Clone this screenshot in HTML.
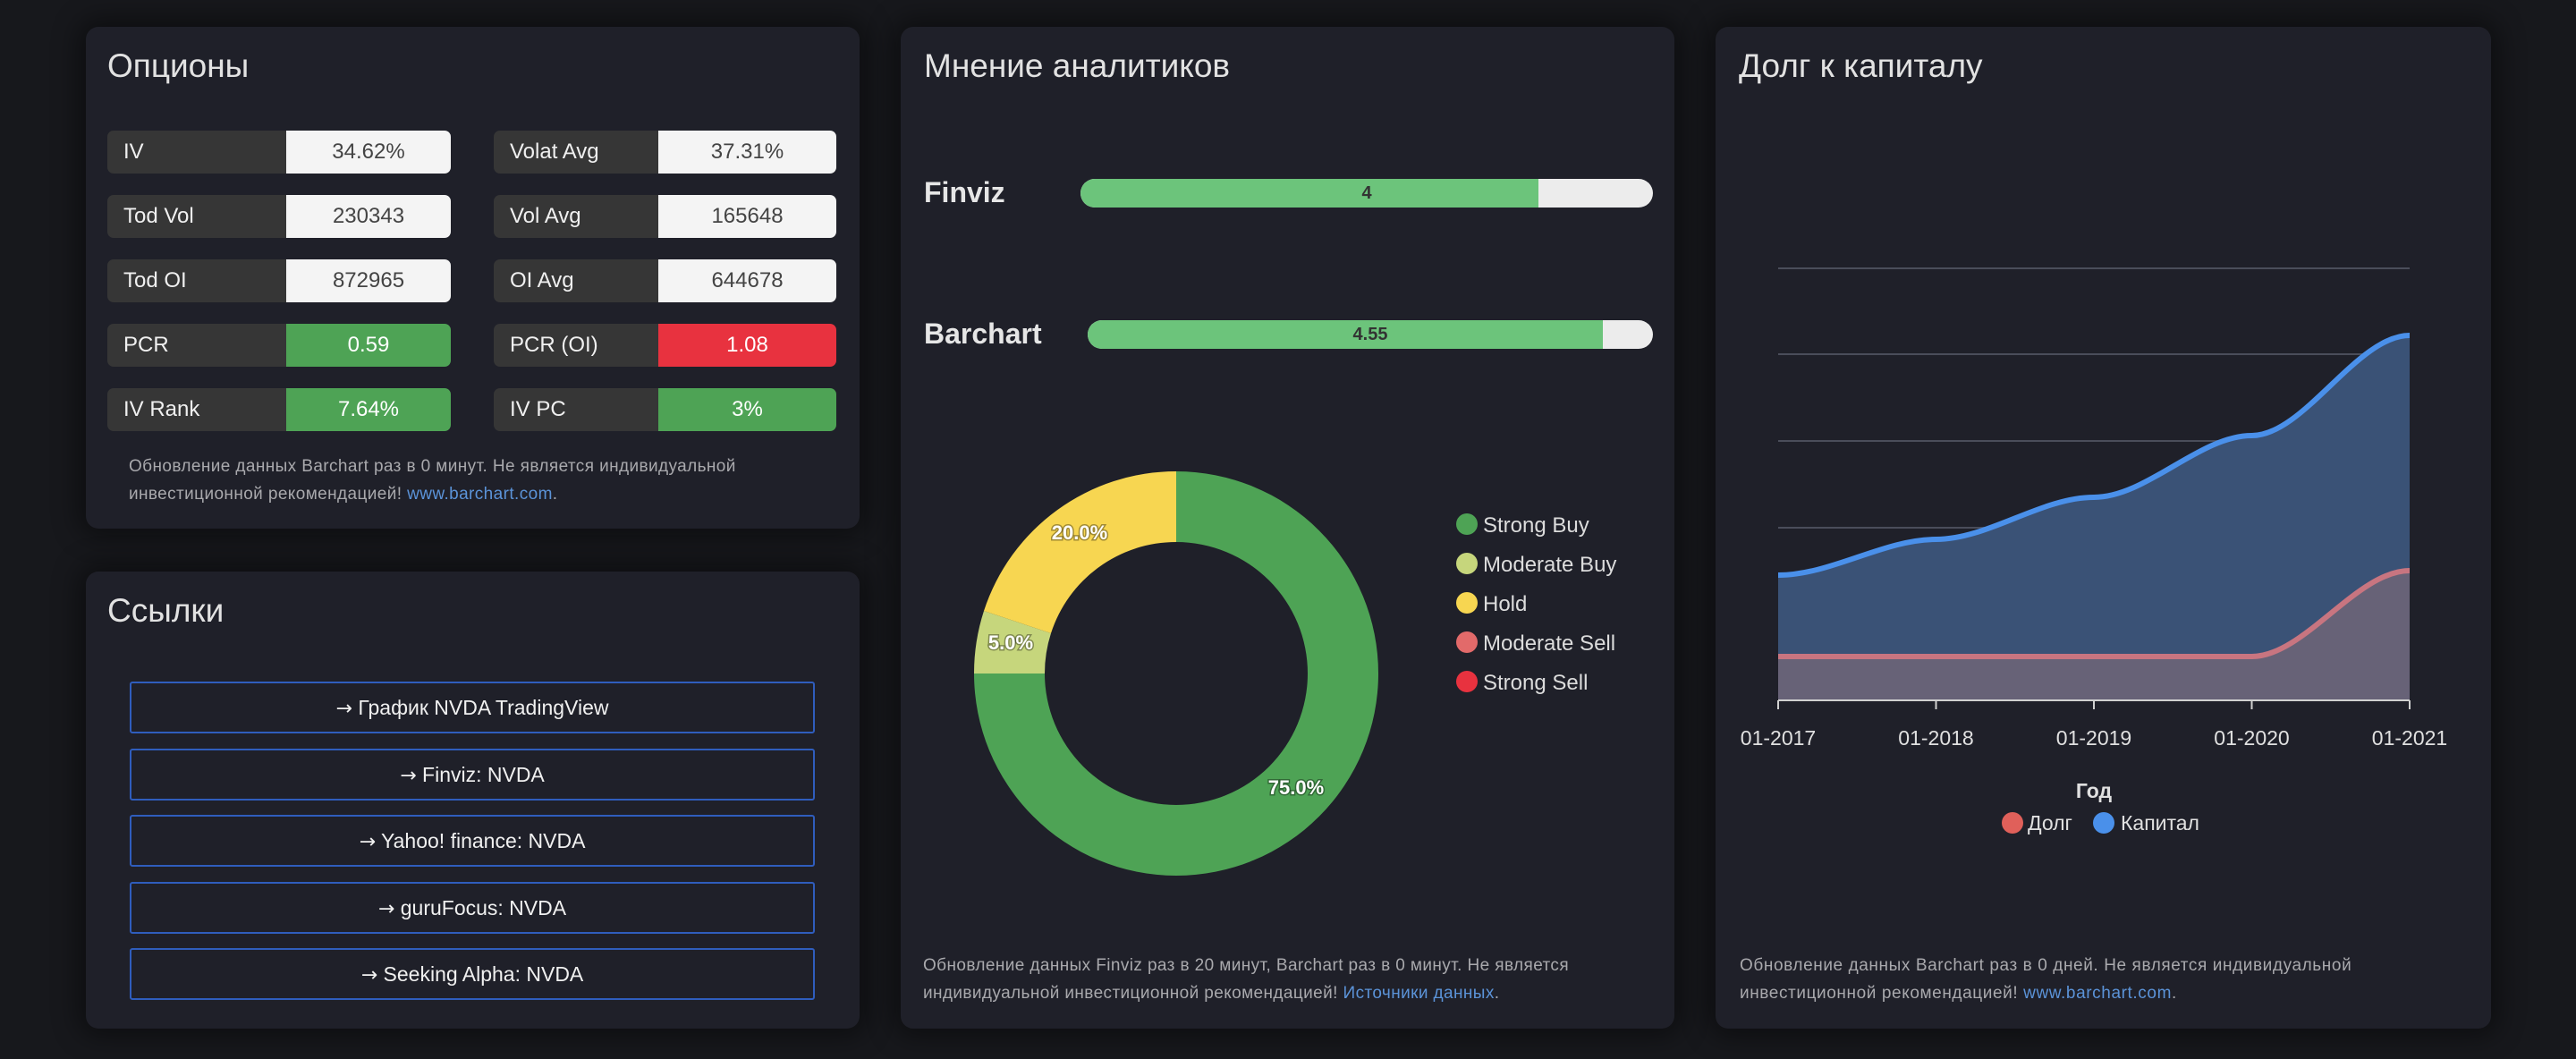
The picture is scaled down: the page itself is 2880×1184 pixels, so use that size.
<!DOCTYPE html>
<html><head><meta charset="utf-8"><style>
*{margin:0;padding:0;box-sizing:border-box}
body{width:2880px;height:1184px;background:#17181c;font-family:"Liberation Sans","DejaVu Sans",sans-serif;position:relative;overflow:hidden;color:#e4e4e4}
.card{position:absolute;background:#1f2029;border-radius:14px;box-shadow:0 0 30px 8px rgba(0,0,0,.45)}
.t{position:absolute;font-size:37px;color:#e2e2e2}
.row{position:absolute;height:48px;display:flex;border-radius:7px;overflow:hidden;font-size:24px}
.row .l{background:#363636;color:#f0f0f0;padding-left:18px;line-height:48px}
.row .v{background:#f4f4f4;color:#444;text-align:center;line-height:48px;flex:1}
.g{background:#4ea355!important;color:#fff!important}
.r{background:#e8323f!important;color:#fff!important}
.note{position:absolute;font-size:19px;line-height:31px;color:#a9a9ad}
.note a{color:#5b93d8;text-decoration:none}
.btn{position:absolute;left:145px;width:766px;height:58px;border:2px solid #2f5dbd;border-radius:3px;text-align:center;line-height:54px;font-size:23px;color:#f0f0f0}
.ar{font-family:"DejaVu Sans",sans-serif;font-size:22px}
</style></head><body>

<div class="card" style="left:96px;top:30px;width:865px;height:561px"></div>
<div class="t" style="left:120px;top:53px">Опционы</div>

<div class="row" style="left:120px;top:146px;width:384px"><div class="l" style="width:200px">IV</div><div class="v">34.62%</div></div>
<div class="row" style="left:120px;top:218px;width:384px"><div class="l" style="width:200px">Tod Vol</div><div class="v">230343</div></div>
<div class="row" style="left:120px;top:290px;width:384px"><div class="l" style="width:200px">Tod OI</div><div class="v">872965</div></div>
<div class="row" style="left:120px;top:362px;width:384px"><div class="l" style="width:200px">PCR</div><div class="v g">0.59</div></div>
<div class="row" style="left:120px;top:434px;width:384px"><div class="l" style="width:200px">IV Rank</div><div class="v g">7.64%</div></div>

<div class="row" style="left:552px;top:146px;width:383px"><div class="l" style="width:184px">Volat Avg</div><div class="v">37.31%</div></div>
<div class="row" style="left:552px;top:218px;width:383px"><div class="l" style="width:184px">Vol Avg</div><div class="v">165648</div></div>
<div class="row" style="left:552px;top:290px;width:383px"><div class="l" style="width:184px">OI Avg</div><div class="v">644678</div></div>
<div class="row" style="left:552px;top:362px;width:383px"><div class="l" style="width:184px">PCR (OI)</div><div class="v r">1.08</div></div>
<div class="row" style="left:552px;top:434px;width:383px"><div class="l" style="width:184px">IV PC</div><div class="v g">3%</div></div>

<div class="note" style="left:144px;top:506px;width:780px;letter-spacing:.4px">Обновление данных Barchart раз в 0 минут. Не является индивидуальной инвестиционной рекомендацией! <a>www.barchart.com</a>.</div>

<div class="card" style="left:96px;top:639px;width:865px;height:511px"></div>
<div class="t" style="left:120px;top:662px">Ссылки</div>
<div class="btn" style="top:762px"><span class="ar">→</span> График NVDA TradingView</div>
<div class="btn" style="top:837px"><span class="ar">→</span> Finviz: NVDA</div>
<div class="btn" style="top:911px"><span class="ar">→</span> Yahoo! finance: NVDA</div>
<div class="btn" style="top:986px"><span class="ar">→</span> guruFocus: NVDA</div>
<div class="btn" style="top:1060px"><span class="ar">→</span> Seeking Alpha: NVDA</div>

<div class="card" style="left:1007px;top:30px;width:865px;height:1120px"></div>
<div class="t" style="left:1033px;top:53px">Мнение аналитиков</div>
<div style="position:absolute;left:1033px;top:197px;font-size:32px;font-weight:bold;color:#e6e6e6">Finviz</div>
<div style="position:absolute;left:1208px;top:200px;width:640px;height:32px;border-radius:16px;background:#ececec;overflow:hidden"><div style="width:512px;height:32px;background:#6cc47b;text-align:center;line-height:32px;font-size:20px;font-weight:bold;color:#333;padding-left:128px">4</div></div>
<div style="position:absolute;left:1033px;top:355px;font-size:32px;font-weight:bold;color:#e6e6e6">Barchart</div>
<div style="position:absolute;left:1216px;top:358px;width:632px;height:32px;border-radius:16px;background:#ececec;overflow:hidden"><div style="width:576px;height:32px;background:#6cc47b;text-align:center;line-height:32px;font-size:20px;font-weight:bold;color:#333;padding-left:56px">4.55</div></div>

<svg style="position:absolute;left:0;top:0" width="2880" height="1184">
<g transform="translate(0,22)">
<path d="M1315,505 A226,226 0 1 1 1089,731 L1168,731 A147,147 0 1 0 1315,584 Z" fill="#4ea355"/>
<path d="M1089,731 A226,226 0 0 1 1100,661 L1175,686 A147,147 0 0 0 1168,731 Z" fill="#c6d67c"/>
<path d="M1100,661 A226,226 0 0 1 1315,505 L1315,584 A147,147 0 0 0 1175,686 Z" fill="#f7d651"/>
<g font-family="Liberation Sans,sans-serif" font-weight="bold" font-size="22" fill="#fff" style="paint-order:stroke" stroke="rgba(0,0,0,.35)" stroke-width="3">
<text x="1449" y="866" text-anchor="middle">75.0%</text>
<text x="1130" y="704" text-anchor="middle">5.0%</text>
<text x="1207" y="581" text-anchor="middle">20.0%</text>
</g>
</g>
<g font-family="Liberation Sans,sans-serif" font-size="24" fill="#dcdcdc">
<circle cx="1640" cy="586" r="12" fill="#4ea355"/><text x="1658" y="595">Strong Buy</text>
<circle cx="1640" cy="630" r="12" fill="#c6d67c"/><text x="1658" y="639">Moderate Buy</text>
<circle cx="1640" cy="674" r="12" fill="#f7d651"/><text x="1658" y="683">Hold</text>
<circle cx="1640" cy="718" r="12" fill="#e26a6a"/><text x="1658" y="727">Moderate Sell</text>
<circle cx="1640" cy="762" r="12" fill="#e8323f"/><text x="1658" y="771">Strong Sell</text>
</g>

<g stroke="#4a4d5a" stroke-width="2">
<line x1="1988" y1="300" x2="2694" y2="300"/><line x1="1988" y1="396" x2="2694" y2="396"/>
<line x1="1988" y1="493" x2="2694" y2="493"/><line x1="1988" y1="590" x2="2694" y2="590"/>
<line x1="1988" y1="686" x2="2694" y2="686"/>
</g>
<path d="M1988,643 C2047,643 2106,603 2164.5,603 C2223,603 2282,556 2341,556 C2400,556 2459,487 2517.5,487 C2576,487 2635,375 2694,375 L2694,783 L1988,783 Z" fill="#3a5276"/>
<path d="M1988,734 L2517.5,734 C2576,734 2635,638 2694,638 L2694,783 L1988,783 Z" fill="#676277"/>
<path d="M1988,643 C2047,643 2106,603 2164.5,603 C2223,603 2282,556 2341,556 C2400,556 2459,487 2517.5,487 C2576,487 2635,375 2694,375" fill="none" stroke="#4a90ea" stroke-width="6"/>
<path d="M1988,734 L2517.5,734 C2576,734 2635,638 2694,638" fill="none" stroke="#c87580" stroke-width="6"/>
<g stroke="#d0d0d0" stroke-width="2">
<line x1="1988" y1="783" x2="2694" y2="783"/>
<line x1="1988" y1="783" x2="1988" y2="793"/><line x1="2164.5" y1="783" x2="2164.5" y2="793"/>
<line x1="2341" y1="783" x2="2341" y2="793"/><line x1="2517.5" y1="783" x2="2517.5" y2="793"/>
<line x1="2694" y1="783" x2="2694" y2="793"/>
</g>
<g font-family="Liberation Sans,sans-serif" font-size="23" fill="#e0e0e0" text-anchor="middle">
<text x="1988" y="833">01-2017</text><text x="2164.5" y="833">01-2018</text><text x="2341" y="833">01-2019</text>
<text x="2517.5" y="833">01-2020</text><text x="2694" y="833">01-2021</text>
<text x="2341" y="892" font-weight="bold">Год</text>
</g>
<g font-family="Liberation Sans,sans-serif" font-size="23" fill="#e0e0e0">
<circle cx="2250" cy="920" r="12" fill="#e0605a"/><text x="2267" y="928">Долг</text>
<circle cx="2352" cy="920" r="12" fill="#4a90ea"/><text x="2371" y="928">Капитал</text>
</g>
</svg>

<div class="note" style="left:1032px;top:1064px;width:830px;letter-spacing:.4px">Обновление данных Finviz раз в 20 минут, Barchart раз в 0 минут. Не является индивидуальной инвестиционной рекомендацией! <a>Источники данных</a>.</div>

<div class="card" style="left:1918px;top:30px;width:867px;height:1120px;z-index:-1"></div>
<div class="t" style="left:1944px;top:53px">Долг к капиталу</div>
<div class="note" style="left:1945px;top:1064px;width:780px;letter-spacing:.6px">Обновление данных Barchart раз в 0 дней. Не является индивидуальной инвестиционной рекомендацией! <a>www.barchart.com</a>.</div>
</body></html>
